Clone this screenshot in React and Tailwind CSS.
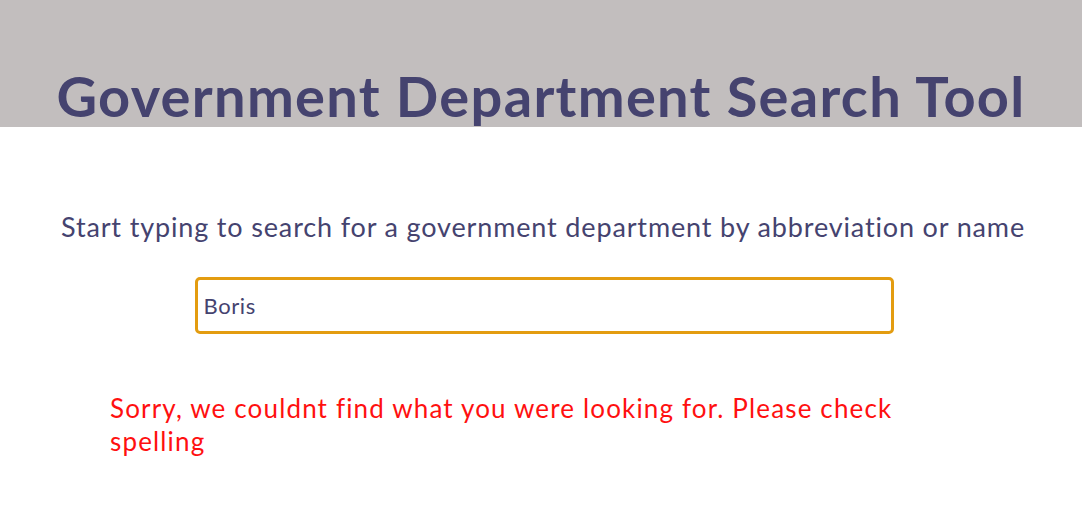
export default function App() {
  return (
    <div className="min-h-[526px] bg-white font-['Lato',sans-serif]">
      <header className="h-[127px] bg-[#c2bebe] pt-[58px]">
        <h1 className="text-center text-[56px] font-bold leading-[76px] tracking-[1.3px] text-[#45436f]">
          Government Department Search Tool
        </h1>
      </header>

      <main className="flex flex-col items-center pt-[83px]">
        <p className="ml-[4px] text-center text-[27px] leading-[34px] tracking-[0.85px] text-[#45436f]">
          Start typing to search for a government department by abbreviation or name
        </p>

        <input
          type="text"
          defaultValue="Boris"
          className="ml-[6px] mt-[33px] h-[57px] w-[699px] rounded-[5px] border-[3px] border-[#e39c10] px-[6px] text-[22px] tracking-[0.6px] text-[#45436f] outline-none"
        />

        <div className="mt-[58px] w-full pl-[110px]">
          <p className="w-[800px] text-[26px] leading-[33px] tracking-[1.15px] text-[#ff1010]">
            Sorry, we couldnt find what you were looking for. Please check spelling
          </p>
        </div>
      </main>
    </div>
  )
}
